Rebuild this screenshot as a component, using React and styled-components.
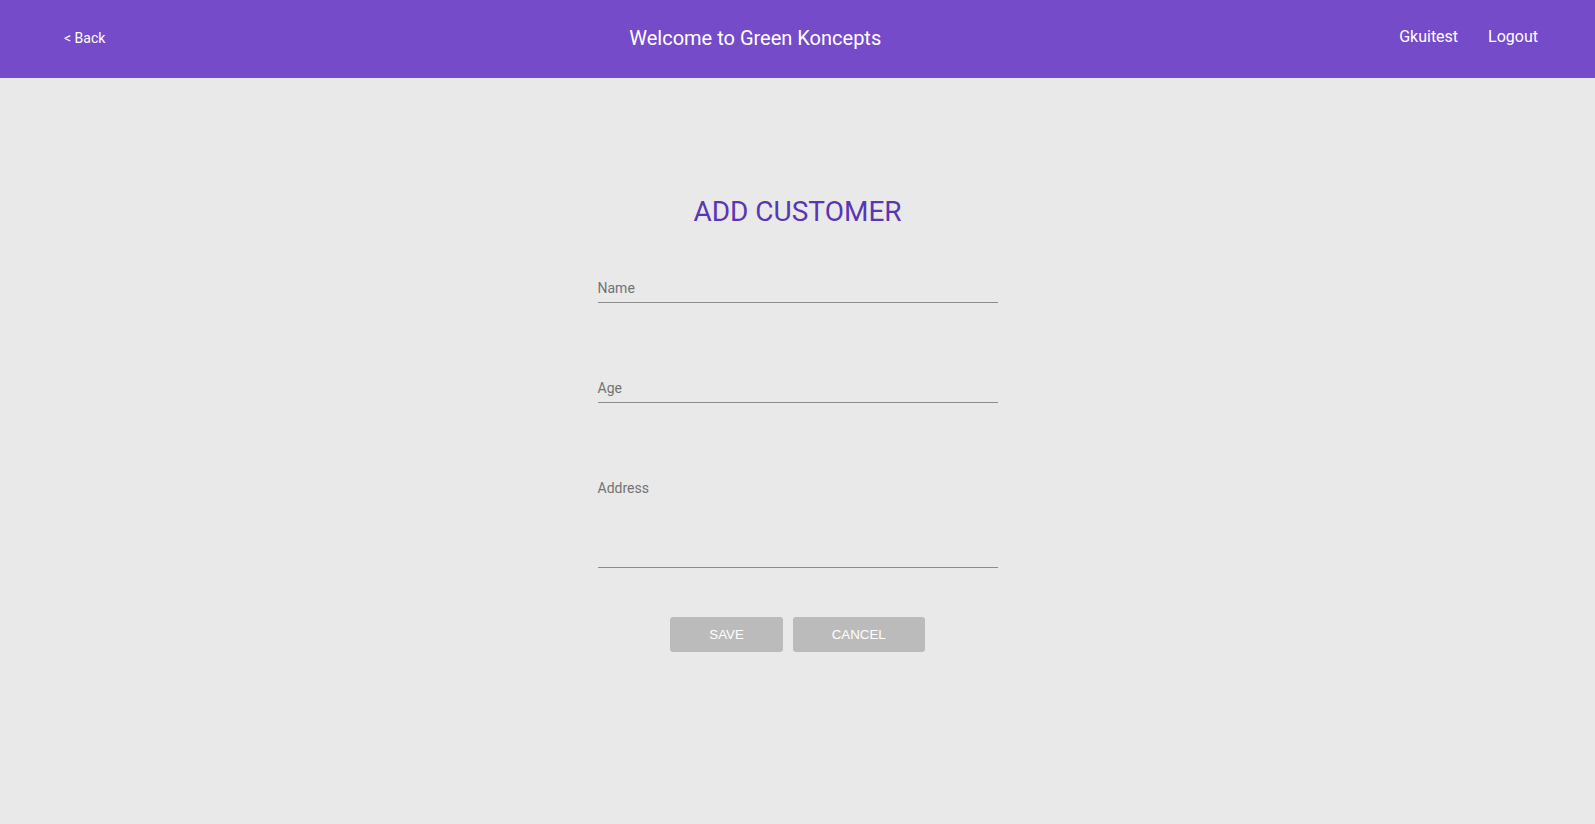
import React from "react";
import styled, { createGlobalStyle } from "styled-components";

const GlobalStyle = createGlobalStyle`
  html, body { margin: 0; padding: 0; }
  body {
    background: #e9e9e9;
    font-family: Roboto, "Liberation Sans", Arial, sans-serif;
  }
  * { box-sizing: border-box; }
`;

const Page = styled.div`
  min-height: 824px;
  background: #e9e9e9;
`;

const Header = styled.header`
  height: 78px;
  background: #764bc9;
  color: #ffffff;
  display: flex;
  align-items: center;
  justify-content: space-between;
  padding: 0 57px 2px 64px;
`;

const BackLink = styled.a`
  font-size: 14px;
  color: #ffffff;
  text-decoration: none;
  cursor: pointer;
`;

const HeaderTitle = styled.h1`
  margin: 0 0 0 6px;
  font-size: 20px;
  font-weight: 400;
`;

const UserNav = styled.nav`
  display: flex;
  align-items: center;
  gap: 30px;
  margin-top: -4px;
`;

const NavItem = styled.span`
  font-size: 16px;
  color: #ffffff;
  cursor: pointer;
`;

const Main = styled.main`
  display: flex;
  flex-direction: column;
  align-items: center;
  padding-top: 117px;
`;

const Title = styled.h2`
  margin: 0 0 51px;
  font-size: 28px;
  line-height: 34px;
  font-weight: 400;
  color: #5a36b3;
`;

const Form = styled.form`
  width: 400px;
  display: flex;
  flex-direction: column;
  gap: 77px;
`;

const Field = styled.label`
  display: flex;
  flex-direction: column;
  border-bottom: 1px solid #8c8c8c;
  height: ${(p) => (p.$multiline ? "88px" : "23px")};
`;

const FieldLabel = styled.span`
  font-size: 14px;
  line-height: 16px;
  color: #737373;
`;

const FieldInput = styled.input`
  flex: 1;
  border: none;
  background: transparent;
  outline: none;
  font-family: inherit;
  font-size: 14px;
  padding: 0;
`;

const FieldArea = styled.textarea`
  flex: 1;
  border: none;
  background: transparent;
  outline: none;
  resize: none;
  font-family: inherit;
  font-size: 14px;
  padding: 0;
`;

const Actions = styled.div`
  display: flex;
  justify-content: center;
  gap: 10px;
  margin-top: 49px;
`;

const Button = styled.button`
  height: 35px;
  padding: 0 39px;
  border: none;
  border-radius: 3px;
  background: #bbbbbb;
  color: #ffffff;
  font-family: "Liberation Sans", Arial, sans-serif;
  font-size: 13.3px;
  text-transform: uppercase;
  cursor: pointer;
`;

export default function App() {
  return (
    <Page>
      <GlobalStyle />
      <Header>
        <BackLink>&lt; Back</BackLink>
        <HeaderTitle>Welcome to Green Koncepts</HeaderTitle>
        <UserNav>
          <NavItem>Gkuitest</NavItem>
          <NavItem>Logout</NavItem>
        </UserNav>
      </Header>
      <Main>
        <Title>ADD CUSTOMER</Title>
        <Form onSubmit={(e) => e.preventDefault()}>
          <Field>
            <FieldLabel>Name</FieldLabel>
            <FieldInput type="text" />
          </Field>
          <Field>
            <FieldLabel>Age</FieldLabel>
            <FieldInput type="text" />
          </Field>
          <Field $multiline>
            <FieldLabel>Address</FieldLabel>
            <FieldArea />
          </Field>
        </Form>
        <Actions>
          <Button type="button">Save</Button>
          <Button type="button">Cancel</Button>
        </Actions>
      </Main>
    </Page>
  );
}
